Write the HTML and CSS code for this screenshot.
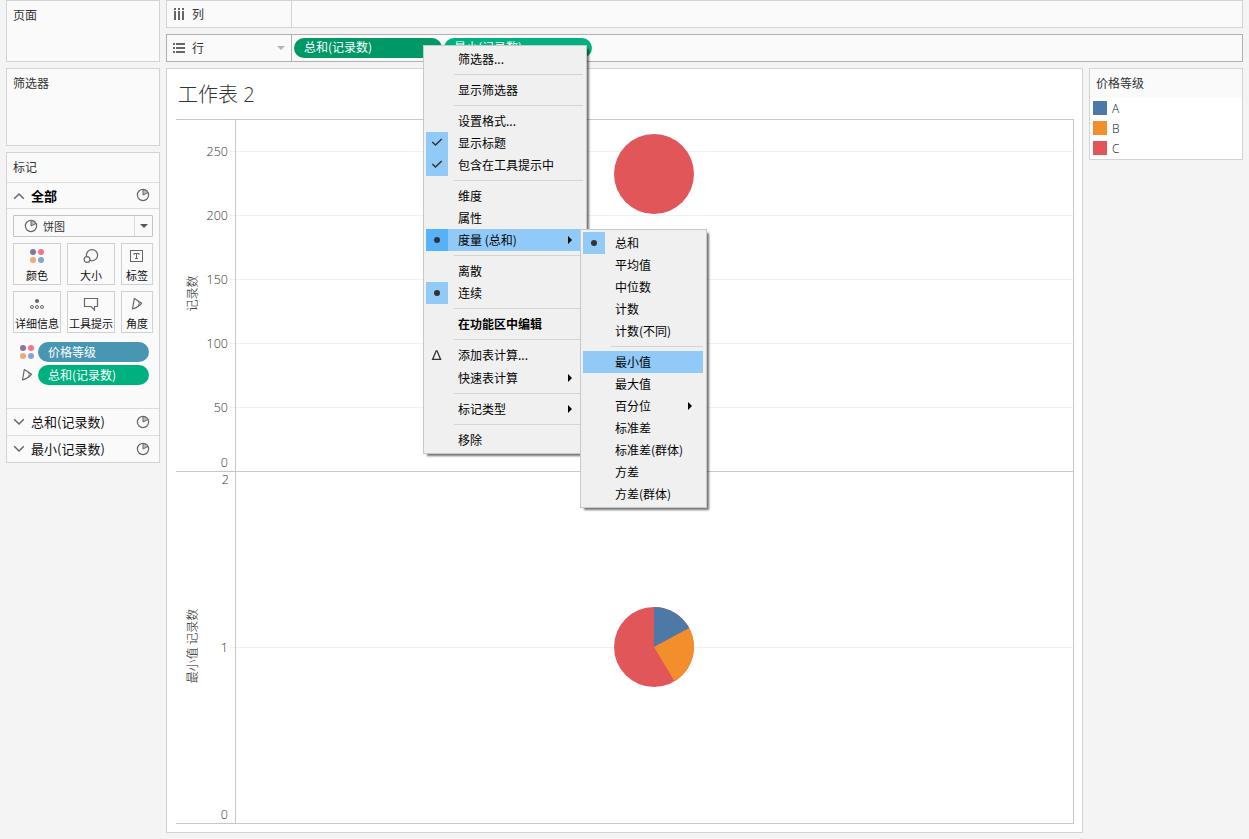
FILE: index.html
```html
<!DOCTYPE html>
<html lang="zh-CN">
<head>
    <meta charset="UTF-8">
    <meta name="viewport" content="width=device-width, initial-scale=1.0">
    <title>工作表 2</title>
    <link rel="stylesheet" href="styles.css">
</head>
<body>

    <!-- shared icons -->
    <svg class="defs" width="0" height="0">
        <symbol id="pie" viewBox="0 0 14 14">
            <circle cx="7" cy="7" r="5.6" fill="none" stroke="#666" stroke-width="1.2"/>
            <path d="M7 7V1.4A5.6 5.6 0 0 1 12 4.5Z" fill="#bbb" stroke="#666" stroke-width="1"/>
        </symbol>
        <symbol id="dots" viewBox="0 0 14 14">
            <circle cx="3" cy="3" r="3" fill="#8a7399"/>
            <circle cx="11" cy="3" r="3" fill="#fb7185"/>
            <circle cx="3" cy="11" r="3" fill="#f3a778"/>
            <circle cx="11" cy="11" r="3" fill="#83a6cd"/>
        </symbol>
        <symbol id="angle" viewBox="0 0 12 14">
            <path d="M3.3 1.5L10.6 6.2Q8 10 1.5 12Z" fill="none" stroke="#666" stroke-width="1.2" stroke-linejoin="round"/>
            <path d="M7.6 4.6Q9 6.5 7.4 9" fill="none" stroke="#666"/>
        </symbol>
        <symbol id="down" viewBox="0 0 12 12">
            <path d="M1.2 3.2L6 8L10.8 3.2" fill="none" stroke="#666" stroke-width="1.5"/>
        </symbol>
        <symbol id="up" viewBox="0 0 12 12">
            <path d="M1.2 8.8L6 4L10.8 8.8" fill="none" stroke="#666" stroke-width="1.5"/>
        </symbol>
        <symbol id="check" viewBox="0 0 22 22">
            <path d="M6.3 10L9.5 13L15.7 7" fill="none" stroke="#333" stroke-width="1.5"/>
        </symbol>
        <symbol id="radio" viewBox="0 0 22 22">
            <circle cx="11" cy="11" r="3" fill="#333"/>
        </symbol>
        <symbol id="delta" viewBox="0 0 22 22">
            <path d="M6.6 15.4H14.6L11 6.8H10.2Z" fill="none" stroke="#333" stroke-width="1.3"/>
        </symbol>
    </svg>

    <div class="app">
        <div class="sidebar">
            <div class="card pages">页面</div>
            <div class="card filters">筛选器</div>
            <div class="card marks">
                <div class="marks-title">标记</div>
                <div class="marks-row all">
                    <svg class="chevron"><use href="#up"/></svg>
                    <span>全部</span>
                    <svg class="pie"><use href="#pie"/></svg>
                </div>
                <div class="marks-body">
                    <div class="select">
                        <svg class="pie"><use href="#pie"/></svg>
                        <span>饼图</span>
                        <div class="select-arrow"><i class="caret"></i></div>
                    </div>
                    <div class="mark-btns">
                        <div class="mark-btn"><svg width="14" height="14"><use href="#dots"/></svg>颜色</div>
                        <div class="mark-btn">
                            <svg width="16" height="14" viewBox="0 0 16 14" fill="#fafafa" stroke="#666" stroke-width="1.2">
                                <circle cx="9" cy="6.2" r="5.6"/><circle cx="4" cy="10.5" r="2.9"/>
                            </svg>大小
                        </div>
                        <div class="mark-btn">
                            <svg width="14" height="14" viewBox="0 0 14 14" fill="none" stroke="#666">
                                <rect x=".5" y="1.5" width="12" height="11"/>
                                <path d="M4 6V4.5H9V6M6.5 4.5V9.5M5 9.5H8"/>
                            </svg>标签
                        </div>
                        <div class="mark-btn">
                            <svg width="14" height="14" viewBox="0 0 14 14" fill="none" stroke="#666">
                                <circle cx="7" cy="4" r="2" fill="#666" stroke="none"/>
                                <circle cx="2" cy="10" r="1.5"/><circle cx="7" cy="10" r="1.5"/><circle cx="12" cy="10" r="1.5"/>
                            </svg>详细信息
                        </div>
                        <div class="mark-btn">
                            <svg width="16" height="14" viewBox="0 0 16 14" fill="none" stroke="#666" stroke-width="1.2">
                                <path d="M1.5 1.5H14.5V9.5H11.5V13L8 9.5H1.5Z"/>
                            </svg>工具提示
                        </div>
                        <div class="mark-btn"><svg width="12" height="14"><use href="#angle"/></svg>角度</div>
                    </div>
                    <div class="mark-pill">
                        <svg width="14" height="14"><use href="#dots"/></svg>
                        <div class="pill blue">价格等级</div>
                    </div>
                    <div class="mark-pill">
                        <svg width="14" height="14"><use href="#angle"/></svg>
                        <div class="pill green">总和(记录数)</div>
                    </div>
                </div>
                <div class="marks-row">
                    <svg class="chevron"><use href="#down"/></svg>
                    <span>总和(记录数)</span>
                    <svg class="pie"><use href="#pie"/></svg>
                </div>
                <div class="marks-row">
                    <svg class="chevron"><use href="#down"/></svg>
                    <span>最小(记录数)</span>
                    <svg class="pie"><use href="#pie"/></svg>
                </div>
            </div>
        </div>

        <div class="main">
            <div class="shelf">
                <div class="shelf-label">
                    <svg width="12" height="12" fill="#666">
                        <path d="M1 0h2v2h-2zM5 0h2v2h-2zM9 0h2v2h-2zM1 3h2v9h-2zM5 3h2v9h-2zM9 3h2v9h-2z"/>
                    </svg>
                    <span>列</span>
                </div>
            </div>
            <div class="shelf active">
                <div class="shelf-label">
                    <svg width="12" height="12" fill="#666">
                        <path d="M0 1h2v2h-2zM0 5h2v2h-2zM0 9h2v2h-2zM3 1h9v2h-9zM3 5h9v2h-9zM3 9h9v2h-9z"/>
                    </svg>
                    <span>行</span>
                    <i class="caret light"></i>
                </div>
                <div class="pills">
                    <div class="pill selected">总和(记录数)<i class="caret white"></i></div>
                    <div class="pill green">最小(记录数)</div>
                </div>
            </div>

            <div class="content">
                <div class="sheet">
                    <div class="sheet-title">工作表 2</div>
                    <svg class="chart" width="898" height="705" viewBox="176 119 898 705">
                        <g class="grid">
                            <path d="M230 151.5H1073M230 215.5H1073M230 279.5H1073M230 343.5H1073M230 407.5H1073M230 647.5H1073"/>
                        </g>
                        <g class="frame">
                            <path d="M176 119.5H1074M176 471.5H1074M176 823.5H1074M235.5 119V824M1073.5 119V824"/>
                        </g>
                        <g class="ticks">
                            <text x="228" y="156">250</text>
                            <text x="228" y="220">200</text>
                            <text x="228" y="284">150</text>
                            <text x="228" y="348">100</text>
                            <text x="228" y="412">50</text>
                            <text x="228" y="467">0</text>
                            <text x="229" y="484">2</text>
                            <text x="228" y="652">1</text>
                            <text x="228" y="819">0</text>
                        </g>
                        <g class="axis-title">
                            <text transform="translate(196.5 293.5) rotate(-90)">记录数</text>
                            <text transform="translate(196.5 646) rotate(-90)">最小值 记录数</text>
                        </g>
                        <circle cx="654" cy="174" r="40" fill="#e15759"/>
                        <circle cx="654" cy="647" r="40" fill="#e15759"/>
                        <path d="M654 647V607A40 40 0 0 1 689.2 628Z" fill="#4e79a7"/>
                        <path d="M654 647L689.2 628A40 40 0 0 1 674.5 681.3Z" fill="#f28e2b"/>
                    </svg>
                </div>
                <div class="legend">
                    <div class="legend-title">价格等级</div>
                    <div class="legend-item"><i class="swatch a"></i>A</div>
                    <div class="legend-item"><i class="swatch b"></i>B</div>
                    <div class="legend-item"><i class="swatch c"></i>C</div>
                </div>
            </div>
        </div>
    </div>

    <div class="menu pill-menu">
        <div class="item">筛选器...</div>
        <hr>
        <div class="item">显示筛选器</div>
        <hr>
        <div class="item">设置格式...</div>
        <div class="item"><svg class="mark on"><use href="#check"/></svg>显示标题</div>
        <div class="item"><svg class="mark on"><use href="#check"/></svg>包含在工具提示中</div>
        <hr>
        <div class="item">维度</div>
        <div class="item">属性</div>
        <div class="item hover"><svg class="mark on"><use href="#radio"/></svg>度量 (总和)<i class="arrow"></i></div>
        <hr>
        <div class="item">离散</div>
        <div class="item"><svg class="mark on"><use href="#radio"/></svg>连续</div>
        <hr>
        <div class="item bold">在功能区中编辑</div>
        <hr>
        <div class="item tall"><svg class="mark"><use href="#delta"/></svg>添加表计算...</div>
        <div class="item">快速表计算<i class="arrow"></i></div>
        <hr>
        <div class="item">标记类型<i class="arrow"></i></div>
        <hr>
        <div class="item">移除</div>
    </div>

    <div class="menu measure-menu">
        <div class="item"><svg class="mark on"><use href="#radio"/></svg>总和</div>
        <div class="item">平均值</div>
        <div class="item">中位数</div>
        <div class="item">计数</div>
        <div class="item">计数(不同)</div>
        <hr>
        <div class="item hover">最小值</div>
        <div class="item">最大值</div>
        <div class="item">百分位<i class="arrow"></i></div>
        <div class="item">标准差</div>
        <div class="item">标准差(群体)</div>
        <div class="item">方差</div>
        <div class="item">方差(群体)</div>
    </div>

</body>
</html>
```

FILE: styles.css
```css
* {
    box-sizing: border-box;
}
body {
    margin: 0;
    height: 839px;
    overflow: hidden;
    position: relative;
    background-color: #f4f4f4;
    color: #333;
    font-family: "Noto Sans CJK SC", sans-serif;
    font-size: 12px;
}
svg {
    display: block;
    flex: none;
}
.defs {
    position: absolute;
}
.app {
    display: flex;
    gap: 6px;
    padding: 0 6px;
}

/* left side */
.sidebar {
    width: 154px;
    flex: none;
    display: flex;
    flex-direction: column;
    gap: 6px;
}
.card {
    background-color: #fafafa;
    border: 1px solid #d3d3d3;
}
.pages,
.filters {
    padding: 5px 6px;
    line-height: 18px;
}
.pages {
    height: 62px;
}
.filters {
    height: 78px;
}
.marks {
    height: 311px;
}
.marks-title {
    height: 29px;
    line-height: 28px;
    padding-left: 6px;
}
.marks-row {
    display: flex;
    align-items: center;
    height: 27px;
    border-top: 1px solid #dcdcdc;
    padding: 0 9px 0 6px;
    font-size: 13px;
    color: #111;
}
.marks-row.all {
    height: 26px;
    font-weight: bold;
    color: #000;
}
.marks-row span {
    flex: 1;
    margin-left: 6px;
    padding-bottom: 2px;
}
.marks-row.all span {
    padding-bottom: 0;
}
.chevron {
    width: 12px;
    height: 12px;
}
.pie {
    width: 14px;
    height: 14px;
    margin-bottom: 1px;
}
.marks-body {
    height: 200px;
    border-top: 1px solid #dcdcdc;
    padding: 6px 6px 0;
}
.select {
    display: flex;
    align-items: center;
    height: 22px;
    border: 1px solid #c4c4c4;
    border-radius: 1px;
    padding-left: 10px;
    font-size: 11px;
}
.select .pie {
    margin-bottom: 0;
}
.select span {
    flex: 1;
    margin-left: 5px;
}
.select-arrow {
    display: flex;
    align-items: center;
    justify-content: center;
    width: 18px;
    height: 20px;
    border-left: 1px solid #dcdcdc;
}
.caret {
    border: 4px solid transparent;
    border-top-color: #555;
    border-bottom: 0;
}
.caret.light {
    border-top-color: #b4b4b4;
}
.caret.white {
    border-top-color: #fff;
}
.mark-btns {
    display: grid;
    grid-template-columns: 48px 48px 32px;
    grid-auto-rows: 42px;
    gap: 6px;
    margin-top: 6px;
}
.mark-btn {
    display: flex;
    flex-direction: column;
    align-items: center;
    border: 1px solid #d0d0d0;
    padding-top: 5px;
    font-size: 11px;
    line-height: 16px;
    white-space: nowrap;
    color: #111;
}
.mark-btn svg {
    margin-bottom: 4px;
}
.mark-pill {
    display: flex;
    align-items: center;
    gap: 4px;
    padding-left: 7px;
    margin-top: 3px;
}
.mark-btns + .mark-pill {
    margin-top: 9px;
}
.mark-pill .pill {
    width: 111px;
}
.pill {
    height: 20px;
    border-radius: 10px;
    padding: 0 10px;
    line-height: 19px;
    color: #fff;
}
.pill.blue {
    background-color: #4996b2;
}
.pill.green {
    background-color: #00b180;
}
.pill.selected {
    background-color: #009866;
}

/* shelves */
.main {
    flex: 1;
    display: flex;
    flex-direction: column;
    gap: 6px;
}
.shelf {
    display: flex;
    height: 28px;
    background-color: #fafafa;
    border: 1px solid #d3d3d3;
}
.shelf.active {
    border-color: #b0b0b0;
}
.shelf-label {
    display: flex;
    align-items: center;
    width: 125px;
    padding: 0 6px;
    border-right: 1px solid #d3d3d3;
}
.active .shelf-label {
    border-color: #b0b0b0;
}
.shelf-label svg {
    margin: 0 7px 1px 0;
}
.shelf-label span {
    flex: 1;
    padding-bottom: 1px;
}
.pills {
    display: flex;
    gap: 2px;
    padding: 3px 2px;
}
.pills .pill {
    display: flex;
    justify-content: space-between;
    width: 148px;
    line-height: 18px;
}
.pills .caret {
    margin-top: 8px;
}

/* worksheet */
.content {
    display: flex;
    align-items: flex-start;
    gap: 6px;
}
.sheet {
    width: 917px;
    height: 765px;
    background-color: #fff;
    border: 1px solid #d3d3d3;
    padding: 0 9px;
}
.sheet-title {
    height: 50px;
    line-height: 51px;
    padding-left: 2px;
    font-family: "Open Sans", "Noto Sans CJK SC", sans-serif;
    font-size: 20px;
    font-weight: 300;
}
.grid path {
    stroke: #f0f0f0;
}
.frame path {
    stroke: #c8c8c8;
}
.ticks text {
    text-anchor: end;
    font-family: "Open Sans", sans-serif;
    font-size: 12.5px;
    font-weight: 300;
    fill: #333;
}
.axis-title text {
    text-anchor: middle;
    font-weight: 300;
    fill: #222;
}
.legend {
    width: 154px;
    height: 92px;
    background-color: #fff;
    border: 1px solid #d3d3d3;
}
.legend-title {
    height: 29px;
    line-height: 28px;
    padding-left: 6px;
    background-color: #fafafa;
}
.legend-item {
    display: flex;
    align-items: center;
    height: 20px;
    padding-left: 3px;
    gap: 5px;
    font-family: "Open Sans", sans-serif;
    font-weight: 300;
    color: #111;
}
.swatch {
    width: 14px;
    height: 14px;
}
.swatch.a {
    background-color: #4e79a7;
}
.swatch.b {
    background-color: #f28e2b;
}
.swatch.c {
    background-color: #e15759;
}

/* popup menus */
.menu {
    position: absolute;
    background-color: #f0f0f0;
    border: 1px solid #c8c8c8;
    padding: 2px 3px 2px 2px;
    box-shadow: 3px 3px 2px -1px rgba(0, 0, 0, 0.55);
    color: #000;
}
.pill-menu {
    left: 423px;
    top: 45px;
    width: 164px;
}
.measure-menu {
    left: 580px;
    top: 229px;
    width: 127px;
}
.menu hr {
    margin: 4px 0 4px 28px;
    border: 0;
    height: 1px;
    background-color: #d4d4d4;
}
.item {
    display: flex;
    height: 22px;
    padding-left: 32px;
    line-height: 22px;
    white-space: nowrap;
}
.item.tall {
    height: 23px;
}
.item.hover {
    background-color: #91c9f7;
}
.item.bold {
    font-weight: bold;
}
.mark {
    width: 22px;
    height: 22px;
    margin: 0 10px 0 -32px;
}
.mark.on {
    background-color: #91c9f7;
}
.hover .mark.on {
    background-color: #56b0fa;
}
.arrow {
    align-self: center;
    margin: 0 11px 0 auto;
    border: 4px solid transparent;
    border-left-color: #000;
    border-right: 0;
}
```
